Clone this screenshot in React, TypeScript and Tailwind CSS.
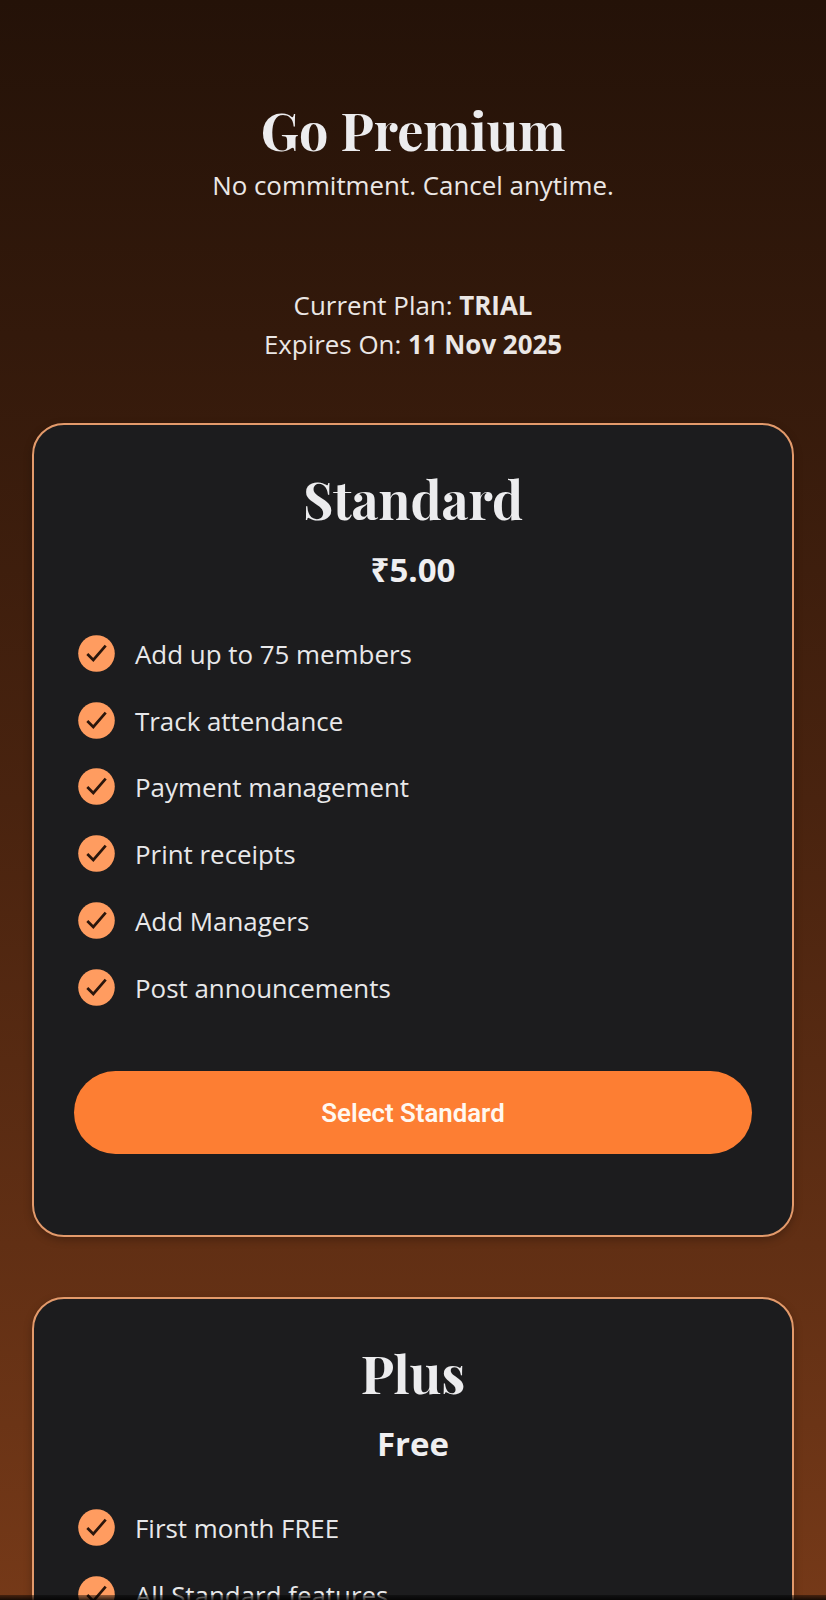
type Plan = {
  name: string;
  price: string;
  features: string[];
};

const plans: Plan[] = [
  {
    name: "Standard",
    price: "₹5.00",
    features: [
      "Add up to 75 members",
      "Track attendance",
      "Payment management",
      "Print receipts",
      "Add Managers",
      "Post announcements",
    ],
  },
  {
    name: "Plus",
    price: "Free",
    features: ["First month FREE", "All Standard features"],
  },
];

function CheckBadge() {
  return (
    <svg viewBox="0 0 37 37" className="h-[37px] w-[37px] shrink-0">
      <circle cx="18.5" cy="18.5" r="18.3" fill="#ff9c60" />
      <path d="M9.3 19 L15.3 25 L27.7 10.6" fill="none" stroke="#2b160c" strokeWidth="2.7" />
    </svg>
  );
}

function Title({ children }: { children: string }) {
  return (
    <h2 className="text-center font-['Playfair_Display','Liberation_Serif',serif] text-[52px] leading-[62px] font-bold text-[#ececee]">
      {children}
    </h2>
  );
}

function PlanCard({ plan }: { plan: Plan }) {
  return (
    <section className="flex h-[814px] shrink-0 flex-col rounded-[32px] border-2 border-[#e39a6b] bg-[#1c1c1e] px-10 pt-[43px] text-[#e8e8ea] shadow-[0_3px_8px_rgba(0,0,0,0.25)]">
      <Title>{plan.name}</Title>
      <p className="mt-[17px] text-center text-[33px] leading-[45px] font-bold text-[#efeff1]">{plan.price}</p>
      <ul className="mt-[28px] flex flex-col">
        {plan.features.map((feature) => (
          <li key={feature} className="flex h-[66.8px] items-center gap-5 pl-1">
            <CheckBadge />
            <span className="pt-px text-[25.9px] leading-9 whitespace-nowrap">{feature}</span>
          </li>
        ))}
      </ul>
      <button className="mt-auto mb-[81px] h-[83.5px] w-full shrink-0 rounded-full bg-[#fd7e33] pt-0.5 font-[Roboto,sans-serif] text-[25.8px] font-semibold text-[#fff8f0]">
        Select {plan.name}
      </button>
    </section>
  );
}

export default function App() {
  return (
    <main className="relative flex h-[1600px] w-full flex-col overflow-hidden bg-linear-to-b from-[#241208] via-[#49230f] to-[#753918] px-8 pt-[99px] font-['Open_Sans','Noto_Sans',sans-serif] text-[#ebe7e5]">
      <header className="flex shrink-0 flex-col">
        <Title>Go Premium</Title>
        <p className="mt-[6px] text-center text-[25.9px] leading-9">No commitment. Cancel anytime.</p>
      </header>
      <div className="mt-[83px] h-[137px] shrink-0 text-center text-[25.9px] leading-[39px]">
        <p>
          Current Plan: <strong>TRIAL</strong>
        </p>
        <p>
          Expires On: <strong>11 Nov 2025</strong>
        </p>
      </div>
      <div className="flex shrink-0 flex-col gap-[60px]">
        {plans.map((plan) => (
          <PlanCard key={plan.name} plan={plan} />
        ))}
      </div>
      <div className="absolute inset-x-0 bottom-0 h-[5px] bg-linear-to-b from-black/40 to-black/80" />
    </main>
  );
}
